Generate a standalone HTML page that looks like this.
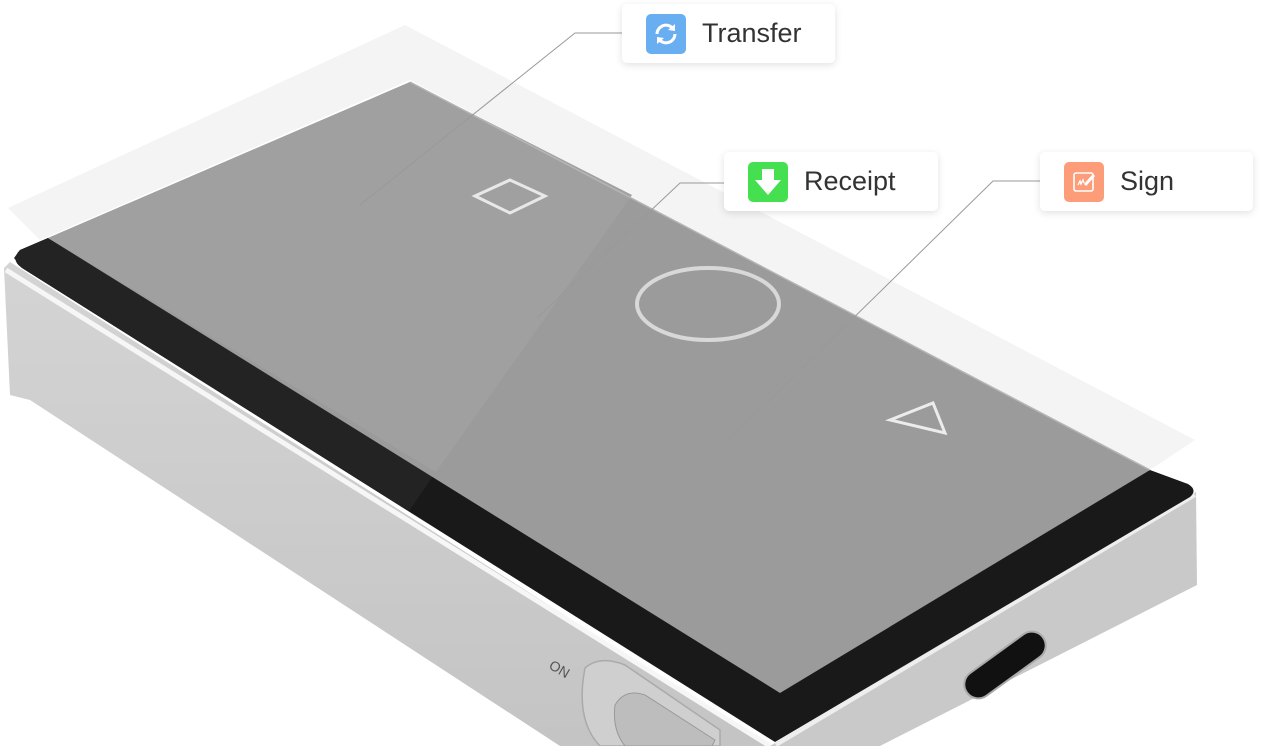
<!DOCTYPE html>
<html><head><meta charset="utf-8"><style>
html,body{margin:0;padding:0;background:#fff;width:1262px;height:746px;overflow:hidden;position:relative;font-family:"Liberation Sans",sans-serif}
.lbl{position:absolute;height:59px;background:#fff;border-radius:5px;box-shadow:0 2px 8px rgba(0,0,0,.12);display:flex;align-items:center}
.ic{width:40px;height:40px;border-radius:5px;margin-left:24px;margin-right:16px;display:flex;align-items:center;justify-content:center}
.lbl span{font-size:27px;color:#333}
</style></head><body>
<svg width="1262" height="746" style="position:absolute;left:0;top:0">
<defs>
<linearGradient id="side" x1="0" y1="0" x2="0" y2="1"><stop offset="0" stop-color="#d4d4d4"/><stop offset="1" stop-color="#c4c4c4"/></linearGradient>
</defs>
<!-- film overhang -->
<polygon points="8,208 405,25 1195,440 1150,470 410,80 40,240" fill="#f4f4f4"/>
<!-- side faces -->
<polygon points="4,268 10,262 770,746 560,746 30,400 10,395" fill="url(#side)"/>
<polygon points="770,746 1196,492 1197,585 880,746" fill="#c9c9c9"/>
<!-- white rim highlight -->
<polyline points="6,270 770,746" stroke="#f6f6f6" stroke-width="5" fill="none"/>
<polyline points="776,745 1195,495" stroke="#eeeeee" stroke-width="4" fill="none"/>
<!-- bezel -->
<path d="M20,250 L48,238 L1150,470 L1188,484 Q1198,490 1190,497 L775,742 L22,268 Q10,260 20,250 Z" fill="#191919"/>
<polygon points="20,250 48,238 436,472 409,511 22,268 14,258" fill="#232323"/>
<!-- screen -->
<polygon points="410,82 1150,470 780,693 48,238" fill="#9b9b9b"/>
<polygon points="410,82 632,195 436,472 48,238" fill="#a0a0a0"/>
<polyline points="410,82 1150,470" stroke="#b5b5b5" stroke-width="1.5" fill="none"/>
<!-- icons on screen -->
<polygon points="475,196 510,180 545,196 510,213" fill="none" stroke="#e8e8e8" stroke-width="3"/>
<ellipse cx="708" cy="304" rx="71" ry="36" fill="none" stroke="#d8d8d8" stroke-width="4"/>
<polygon points="890,420 933,403 945,433" fill="none" stroke="#ececec" stroke-width="3"/>
<!-- usb port -->
<rect x="958" y="651" width="94" height="28" rx="14" transform="rotate(-36 1005 665)" fill="#111" stroke="#aaa" stroke-width="2"/>
<!-- switch -->
<path d="M585,668 Q600,655 625,665 L720,730 L720,746 L600,746 Q575,720 585,668Z" fill="#cfcfcf" stroke="#aaa" stroke-width="1.5"/>
<path d="M615,705 Q625,688 645,695 L715,740 L712,746 L625,746 Q612,730 615,705Z" fill="#bdbdbd" stroke="#999"/>
<text x="548" y="668" font-size="14" fill="#555" transform="rotate(30 548 668)" font-family="Liberation Sans,sans-serif">ON</text>
<!-- leader lines -->
<polyline points="360,205 575,33 636,33" stroke="#999" stroke-width="1" fill="none"/>
<polyline points="537,318 680,183 735,183" stroke="#999" stroke-width="1" fill="none"/>
<polyline points="728,441 993,181 1053,181" stroke="#999" stroke-width="1" fill="none"/>
</svg>
<div class="lbl" style="left:622px;top:4px;width:213px"><div class="ic" style="background:#68aef0"><svg width="26" height="26" viewBox="0 0 26 26"><path d="M4,13 A9,9 0 0 1 20,7.5" stroke="#fff" stroke-width="3" fill="none"/><path d="M22,13 A9,9 0 0 1 6,18.5" stroke="#fff" stroke-width="3" fill="none"/><polygon points="22,3 22,10 15,9" fill="#fff"/><polygon points="4,23 4,16 11,17" fill="#fff"/></svg></div><span>Transfer</span></div>
<div class="lbl" style="left:724px;top:152px;width:214px"><div class="ic" style="background:#44e050"><svg width="28" height="30" viewBox="0 0 28 30"><polygon points="8,2 20,2 20,13 27,13 14,28 1,13 8,13" fill="#fff"/></svg></div><span>Receipt</span></div>
<div class="lbl" style="left:1040px;top:152px;width:213px"><div class="ic" style="background:#fc9c78"><svg width="26" height="26" viewBox="0 0 26 26"><rect x="3" y="4" width="19" height="18" rx="2" fill="none" stroke="#fff" stroke-width="1.6"/><path d="M7,16 l2,-4 l1,3 l2,-4 l1,3" stroke="#fff" stroke-width="1.3" fill="none"/><path d="M14,16 L23,6" stroke="#fff" stroke-width="3"/></svg></div><span>Sign</span></div>
</body></html>
